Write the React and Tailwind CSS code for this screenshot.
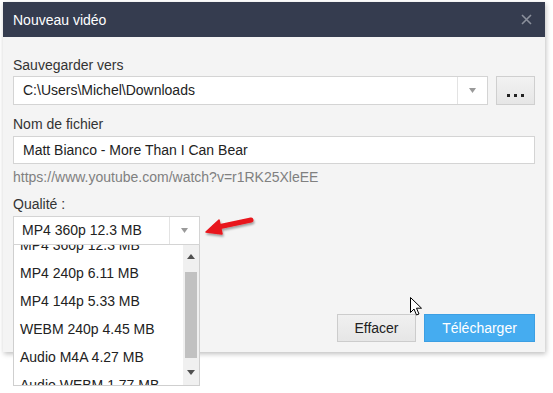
import React from "react";

const items = [
  "MP4 360p 12.3 MB",
  "MP4 240p 6.11 MB",
  "MP4 144p 5.33 MB",
  "WEBM 240p 4.45 MB",
  "Audio M4A 4.27 MB",
  "Audio WEBM 1.77 MB",
];

function Caret() {
  return (
    <svg width="7" height="5" viewBox="0 0 7 5">
      <path d="M0 0 L7 0 L3.5 5 Z" fill="#9a9a9a" />
    </svg>
  );
}

export default function App() {
  return (
    <div
      className="relative w-[553px] h-[393px] bg-white overflow-hidden"
      style={{ fontFamily: '"Liberation Sans", Arial, sans-serif' }}
    >
      <div className="relative ml-[3px] mt-[2px] w-[542px] h-[350px] flex flex-col bg-[#f4f4f4] shadow-[1px_2px_5px_rgba(0,0,0,0.25)]">
        {/* title bar */}
        <div className="h-[35px] shrink-0 bg-[#353c4f] flex items-center justify-between pl-[10px] pr-[13px]">
          <span className="text-white text-[14px] pt-[1px]">Nouveau vidéo</span>
          <svg width="11" height="11" viewBox="0 0 11 11">
            <path d="M1 1 L10 10 M10 1 L1 10" stroke="#8b909c" strokeWidth="1.6" />
          </svg>
        </div>
        {/* body */}
        <div className="flex-1 flex flex-col px-[10px] pt-[19px] pb-[10px] text-[14px] text-[#333]">
          <div className="h-[18px] leading-[18px]">Sauvegarder vers</div>
          <div className="mt-[2px] flex gap-[8px]">
            <div className="flex-1 h-[29px] bg-white border border-[#d4d4d4] flex items-center">
              <span className="flex-1 pl-[9px] text-[#222]">C:\Users\Michel\Downloads</span>
              <div className="w-[30px] h-full border-l border-[#e3e3e3] flex items-center justify-center">
                <Caret />
              </div>
            </div>
            <div className="w-[39px] h-[29px] bg-gradient-to-b from-[#f2f2f2] to-[#e6e6e6] border border-[#cfcfcf] flex items-end justify-center gap-[4px] pb-[7px]">
              <span className="w-[3px] h-[3px] bg-[#222]" />
              <span className="w-[3px] h-[3px] bg-[#222]" />
              <span className="w-[3px] h-[3px] bg-[#222]" />
            </div>
          </div>
          <div className="mt-[10px] h-[18px] leading-[18px]">Nom de fichier</div>
          <div className="mt-[3px] h-[28px] bg-white border border-[#d4d4d4] flex items-center pl-[9px] text-[#222]">
            Matt Bianco - More Than I Can Bear
          </div>
          <div className="mt-[4px] h-[18px] leading-[18px] text-[14px] text-[#808080]">
            https://www.youtube.com/watch?v=r1RK25XleEE
          </div>
          <div className="mt-[9px] h-[18px] leading-[18px]">Qualité :</div>
          <div className="relative mt-[3px] w-[187px] z-10">
            <div className="h-[29px] bg-white border border-[#d4d4d4] flex items-center">
              <span className="flex-1 pl-[8px] text-[#222]">MP4 360p 12.3 MB</span>
              <div className="w-[30px] h-full border-l border-[#e3e3e3] flex items-center justify-center">
                <Caret />
              </div>
            </div>
            {/* dropdown list */}
            <div className="absolute left-0 top-full w-[187px] h-[141px] bg-white border border-[#cfcfcf] border-t-0 flex overflow-hidden">
              <div className="flex-1 overflow-hidden">
                <div className="-mt-[14px]">
                  {items.map((t) => (
                    <div key={t} className="h-[28px] flex items-center pl-[6px] text-[#222]">
                      {t}
                    </div>
                  ))}
                </div>
              </div>
              <div className="w-[16px] bg-[#f0f0f0] flex flex-col items-center">
                <div className="h-[20px] flex items-center justify-center pt-[2px]">
                  <svg width="8" height="5" viewBox="0 0 8 5">
                    <path d="M0 5 L8 5 L4 0 Z" fill="#505050" />
                  </svg>
                </div>
                <div className="mt-[7px] w-[12px] h-[86px] bg-[#c1c1c1]" />
                <div className="flex-1 flex items-center justify-center pt-[2px]">
                  <svg width="8" height="5" viewBox="0 0 8 5">
                    <path d="M0 0 L8 0 L4 5 Z" fill="#505050" />
                  </svg>
                </div>
              </div>
            </div>
          </div>
          <div className="mt-auto flex justify-end gap-[8px]">
            <button className="w-[79px] h-[28px] bg-gradient-to-b from-[#f0f0f0] to-[#e6e6e6] border border-[#cccccc] text-[#222] text-[14px]">
              Effacer
            </button>
            <button className="w-[111px] h-[28px] bg-[#45acf0] border border-[#3c9fe3] text-white text-[14px]">
              Télécharger
            </button>
          </div>
        </div>
      </div>
      {/* red arrow annotation */}
      <svg className="absolute left-[203px] top-[213px]" width="54" height="28" viewBox="0 0 54 28">
        <defs>
          <filter id="sh" x="-20%" y="-40%" width="140%" height="180%">
            <feDropShadow dx="1" dy="2" stdDeviation="1.2" floodColor="#000" floodOpacity="0.35" />
          </filter>
        </defs>
        <g filter="url(#sh)">
          <path d="M48 7 L15 14" stroke="#e8141c" strokeWidth="5" strokeLinecap="round" />
          <path d="M3 19 L16 7 L19 21 Z" fill="#e8141c" stroke="#e8141c" strokeWidth="1.5" strokeLinejoin="round" />
        </g>
      </svg>
      {/* mouse cursor */}
      <svg className="absolute left-[410px] top-[297px]" width="13" height="20" viewBox="0 0 13 20">
        <path
          d="M0.5 0.5 L0.5 15.5 L4 12 L6.5 18 L9 17 L6.5 11.2 L11.5 11.2 Z"
          fill="#fff"
          stroke="#000"
          strokeWidth="1"
          strokeLinejoin="round"
        />
      </svg>
    </div>
  );
}
